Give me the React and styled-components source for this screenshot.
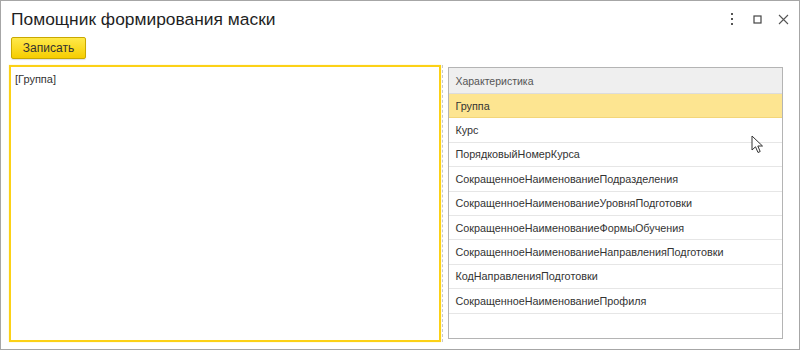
import React from "react";
import styled, { createGlobalStyle } from "styled-components";

const Global = createGlobalStyle`
  html, body { margin: 0; padding: 0; background: #fff; }
  body { font-family: "Liberation Sans", Arial, sans-serif; }
  #root { width: 800px; height: 350px; }
`;

const Window = styled.div`
  position: relative;
  box-sizing: border-box;
  width: 800px;
  height: 350px;
  border: 1px solid #a6a6a6;
  background: #fff;
  display: flex;
  flex-direction: column;
  overflow: hidden;
`;

const TitleBar = styled.div`
  display: flex;
  align-items: center;
  padding: 8px 6px 0 10px;
  height: 20px;
`;

const Title = styled.div`
  flex: 1;
  font-size: 17.4px;
  line-height: 20px;
  color: #1f1f1f;
`;

const WinButtons = styled.div`
  display: flex;
  align-items: center;
`;

const WinBtn = styled.div`
  width: ${(p) => p.$w}px;
  height: 20px;
  display: flex;
  align-items: center;
  justify-content: center;
`;

const Toolbar = styled.div`
  display: flex;
  padding: 8px 0 0 10px;
`;

const Button = styled.button`
  box-sizing: border-box;
  width: 75px;
  height: 22px;
  padding: 0;
  border: 1px solid #c9a800;
  border-radius: 2px;
  background: linear-gradient(#ffe94a, #f6cd00);
  box-shadow: 0 1px 1px rgba(0, 0, 0, 0.12);
  font-family: "Liberation Sans", Arial, sans-serif;
  font-size: 12px;
  color: #333;
`;

const Body = styled.div`
  flex: 1;
  display: flex;
  padding: 6px 16px 8px 8px;
  min-height: 0;
`;

const TextArea = styled.div`
  box-sizing: border-box;
  width: 433px;
  height: 277px;
  border: 2px solid #fcd116;
  box-shadow: 0 0 1px rgba(252, 209, 22, 0.5);
  padding: 6px 4px;
  font-size: 11px;
  color: #333;
`;

const Splitter = styled.div`
  width: 1px;
  margin: 0 4px 0 1px;
  height: 277px;
  border-left: 1px dashed #c8c8c8;
`;

const Table = styled.div`
  box-sizing: border-box;
  width: 335px;
  height: 272px;
  margin-top: 2px;
  border: 1px solid #b4b4b4;
  display: flex;
  flex-direction: column;
`;

const Header = styled.div`
  box-sizing: border-box;
  height: 26px;
  background: #efefef;
  border-bottom: 1px solid #dcdcdc;
  padding: 0 6px;
  display: flex;
  align-items: center;
  font-size: 10.5px;
  color: #555;
`;

const Row = styled.div`
  box-sizing: border-box;
  height: 24.4px;
  padding: 0 6px;
  display: flex;
  align-items: center;
  font-size: 10.8px;
  color: #333;
  background: ${(p) => (p.$active ? "#fde591" : "#fff")};
  border-bottom: 1px solid ${(p) => (p.$active ? "#f3d67a" : "#e6e6e6")};
`;

const Cursor = styled.svg`
  position: absolute;
  left: 750px;
  top: 134px;
`;

const rows = [
  "Группа",
  "Курс",
  "ПорядковыйНомерКурса",
  "СокращенноеНаименованиеПодразделения",
  "СокращенноеНаименованиеУровняПодготовки",
  "СокращенноеНаименованиеФормыОбучения",
  "СокращенноеНаименованиеНаправленияПодготовки",
  "КодНаправленияПодготовки",
  "СокращенноеНаименованиеПрофиля",
];

export default function App() {
  return (
    <>
      <Global />
      <Window>
        <TitleBar>
          <Title>Помощник формирования маски</Title>
          <WinButtons>
            <WinBtn $w={20}>
              <svg width="4" height="12" viewBox="0 0 4 12">
                <rect x="1" y="0" width="2" height="2" fill="#555" />
                <rect x="1" y="5" width="2" height="2" fill="#555" />
                <rect x="1" y="10" width="2" height="2" fill="#555" />
              </svg>
            </WinBtn>
            <WinBtn $w={31}>
              <svg width="9" height="9" viewBox="0 0 9 9">
                <rect x="1" y="1" width="7" height="7" fill="none" stroke="#444" strokeWidth="1.2" />
              </svg>
            </WinBtn>
            <WinBtn $w={20}>
              <svg width="11" height="11" viewBox="0 0 11 11">
                <path d="M1 1 L10 10 M10 1 L1 10" stroke="#555" strokeWidth="1.1" fill="none" />
              </svg>
            </WinBtn>
          </WinButtons>
        </TitleBar>
        <Toolbar>
          <Button>Записать</Button>
        </Toolbar>
        <Body>
          <TextArea>[Группа]</TextArea>
          <Splitter />
          <Table>
            <Header>Характеристика</Header>
            {rows.map((r, i) => (
              <Row key={r} $active={i === 0}>
                {r}
              </Row>
            ))}
          </Table>
        </Body>
        <Cursor width="14" height="20" viewBox="0 0 14 20">
          <path d="M1 1 L1 15 L4.5 11.8 L7 17.5 L9.2 16.5 L6.8 11 L11.5 11 Z" fill="#fff" stroke="#333" strokeWidth="1" strokeLinejoin="round" />
        </Cursor>
      </Window>
    </>
  );
}
